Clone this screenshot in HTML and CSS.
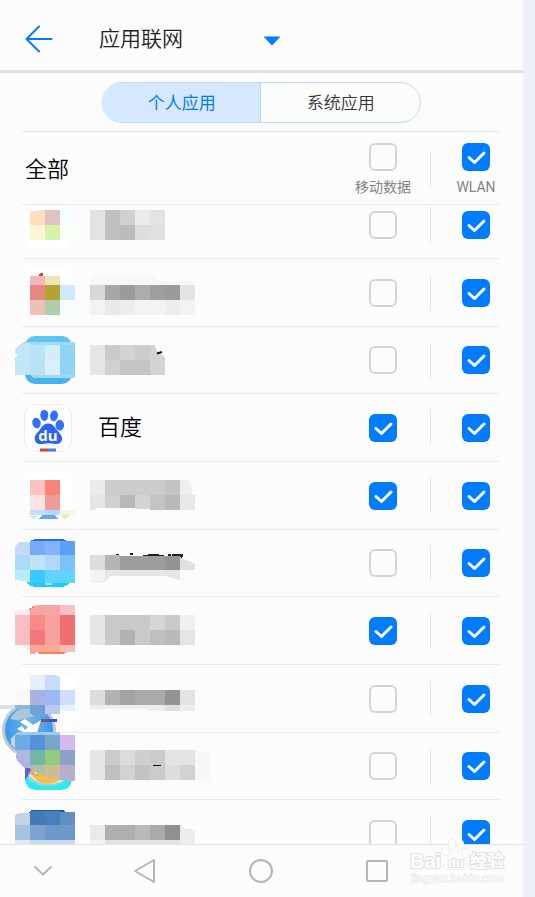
FILE: index.html
```html
<!DOCTYPE html>
<html lang="zh-CN">
<head>
<meta charset="utf-8">
<meta name="viewport" content="width=device-width, initial-scale=1">
<title>应用联网</title>
<link rel="stylesheet" href="styles.css">
</head>
<body>
<div class="screen">
  <header class="topbar">
    <button class="icon-button" type="button" aria-label="返回">
      <svg width="28" height="28" viewBox="0 0 28 28" fill="none" stroke="#007dff" stroke-width="2" stroke-linecap="round" stroke-linejoin="round"><path d="M26.500 14H1.500M14 1.500L1.500 14L14 26.500"/></svg>
    </button>
    <h1 class="title">应用联网</h1>
    <button class="icon-button" type="button" aria-label="菜单">
      <svg width="18" height="10" viewBox="0 0 18 10"><path d="M0.500 0.500H17.500L9 9.500Z" fill="#007dff"/></svg>
    </button>
  </header>

  <nav class="tabs">
    <button class="tab tab-active" type="button">个人应用</button>
    <button class="tab" type="button">系统应用</button>
  </nav>

  <section class="row all-row">
    <h2 class="name">全部</h2>
    <label class="check-field"><input class="check" type="checkbox">移动数据</label>
    <span class="divider"></span>
    <label class="check-field"><input class="check" type="checkbox" checked>WLAN</label>
  </section>

  <ul class="list">
    <li class="row">
      <svg class="art" width="215" height="67" viewBox="0 191 215 67" shape-rendering="crispEdges">
        <rect x="25" y="206" width="47" height="42" rx="9" fill="#fff"/>
        <path d="M30 212L42 210H45V225H30Z" fill="#ffdebb"/><path d="M45 210h15v15h-15z" fill="#dfc3c1"/><path d="M60 210h15v15h-15z" fill="#f6ffff"/>
        <path d="M30 225h15v15h-15z" fill="#fff5d3"/><path d="M45 225h15v15h-15z" fill="#d6f3a9"/><path d="M60 225h15v15h-15z" fill="#fafff7"/>
        <path d="M90 210h15v30h-15zM150 210h15v15h-15z" fill="#e3e3e3"/><path d="M105 210h15v30h-15z" fill="#c0c0c0"/><path d="M120 210h15v15h-15z" fill="#d0d0d0"/><path d="M135 210h15v15h-15z" fill="#ebebeb"/>
        <path d="M120 225h15v15h-15z" fill="#bcbcbc"/><path d="M135 225h15v15h-15z" fill="#ddd"/><path d="M150 225h15v15h-15z" fill="#e0e0e0"/>
      </svg>
      <input class="check" type="checkbox" aria-label="移动数据"><span class="divider"></span><input class="check" type="checkbox" aria-label="WLAN" checked>
    </li>
    <li class="row">
      <svg class="art" width="215" height="67" viewBox="0 259 215 67" shape-rendering="crispEdges">
        <rect x="25" y="269" width="47" height="46" rx="9" fill="#fff"/>
        <circle cx="41" cy="275" r="2" fill="#d8453c"/>
        <path d="M30 276h15v9h-15z" fill="#f1b8b5"/><path d="M45 276h15v9h-15z" fill="#e8e6b3"/>
        <path d="M30 285h15v15h-15z" fill="#e78983"/><path d="M45 285h15v15h-15z" fill="#b6a134"/><path d="M60 285h15v15h-15z" fill="#cdebf8"/>
        <path d="M30 300h15v15h-15z" fill="#eec0b6"/><path d="M45 300h15v15h-15z" fill="#adcdab"/><path d="M60 300h15v15h-15z" fill="#f7fcff"/>
        <path d="M90 276H120V275H135V276H154L160 281H195V285H90Z" fill="#f7f7f7"/>
        <path d="M90 285h15v15h-15z" fill="#d7d7d7"/><path d="M105 285h15v15h-15z" fill="#a7a7a7"/><path d="M120 285h15v15h-15zM165 285h15v15h-15z" fill="#9b9b9b"/><path d="M135 285h15v15h-15z" fill="#acacac"/><path d="M150 285h15v15h-15z" fill="#9f9f9f"/><path d="M180 285h15v15h-15z" fill="#e4e4e4"/>
        <path d="M90 300h105v15h-105z" fill="#f3f3f3"/><path d="M105 300h15v15h-15z" fill="#e9e9e9"/><path d="M120 300h15v15h-15zM165 300h15v15h-15z" fill="#ededed"/>
      </svg>
      <input class="check" type="checkbox" aria-label="移动数据"><span class="divider"></span><input class="check" type="checkbox" aria-label="WLAN" checked>
    </li>
    <li class="row">
      <svg class="art" width="215" height="66" viewBox="0 327 215 66">
        <rect x="25" y="336" width="47" height="24" rx="10" fill="#5bc4f1"/><rect x="25" y="355" width="47" height="29" rx="10" fill="#45b3ee"/>
        <g shape-rendering="crispEdges">
        <path d="M25 342H75V345H20Z" fill="#a1dbf6"/><path d="M30 375H75V378H33Z" fill="#a1d8f6"/>
        <path d="M30 343V375H15V357L17 356V354L15 353V349L20 344Z" fill="#c1e6f8"/><path d="M30 345h15v30h-15z" fill="#b9e2f7"/><path d="M45 345h15v15h-15z" fill="#d5edfb"/><path d="M45 360h15v15h-15z" fill="#dceffa"/><path d="M60 345h15v30h-15z" fill="#90d3f5"/>
        <path d="M90 345h15v30h-15z" fill="#e6e6e6"/><path d="M105 345h15v15h-15z" fill="#cacaca"/><path d="M120 345h15v15h-15zM150 345h5l2 7l8 5v18h-15z" fill="#d3d3d3"/><path d="M135 345h15v15h-15z" fill="#ccc"/><path d="M105 360h15v15h-15z" fill="#d0d0d0"/><path d="M120 360h30v15h-30z" fill="#c4c4c4"/></g>
        <path d="M157 353.500L162 352" stroke="#111" stroke-width="2"/>
      </svg>
      <input class="check" type="checkbox" aria-label="移动数据"><span class="divider"></span><input class="check" type="checkbox" aria-label="WLAN" checked>
    </li>
    <li class="row">
      <svg class="app-icon" width="48" height="48" viewBox="0 0 48 48" role="img" aria-label="百度">
        <rect x="0.500" y="0.500" width="47" height="47" rx="10" fill="#fff" stroke="#eee"/>
        <g fill="#3170fb"><ellipse cx="12.500" cy="19" rx="4.200" ry="5.400" transform="rotate(-12 12.500 19)"/><ellipse cx="20.300" cy="11.300" rx="4" ry="5.600"/><ellipse cx="30" cy="11.800" rx="4" ry="5.400" transform="rotate(8 30 11.800)"/><ellipse cx="35.800" cy="21.200" rx="4.300" ry="5.400"/>
        <path d="M24 19.500C28.500 19.500 30.500 22.500 32.500 25.500C34.500 28.500 38 30.500 38 34.500C38 38.500 35 40.300 31.500 40.100C28 39.900 26.500 39.300 24 39.300C21.500 39.300 19 40.200 16 40.100C12.500 40 10.500 37.500 10.800 33.500C11.200 30 14 28.500 16 25.500C18 22.500 20 19.500 24 19.500Z" fill="#2b63f6"/></g>
        <text class="du" x="24" y="37" text-anchor="middle" fill="#fff">du</text>
        <path d="M16 44.500h8v3h-8z" fill="#dc3c43"/><path d="M24 44.500h8v3h-8z" fill="#3f7bfa"/>
      </svg>
      <span class="name">百度</span>
      <input class="check" type="checkbox" aria-label="百度 移动数据" checked><span class="divider"></span><input class="check" type="checkbox" aria-label="百度 WLAN" checked>
    </li>
    <li class="row">
      <svg class="art" width="215" height="67" viewBox="0 462 215 67" shape-rendering="crispEdges">
        <rect x="25" y="472" width="47" height="43" rx="9" fill="#fff"/>
        <path d="M30 480h15v15h-15z" fill="#fcc3bf"/><path d="M45 480h15v15h-15z" fill="#f88379"/><path d="M30 495h15v15h-15z" fill="#fae5e4"/><path d="M45 495h15v15h-15z" fill="#f09b9b"/>
        <path d="M30 510h15v5h-15z" fill="#bfe0f8"/><path d="M45 510h15v5h-15z" fill="#b8d8fb"/><path d="M60 510h15v5h-15z" fill="#eef8dc"/>
        <path d="M42 515H55L58 519H39Z" fill="#5da9ff"/><path d="M28 516h9l-3 3z" fill="#c7ebff"/><path d="M60 515h11l-6 4z" fill="#daf5b0"/>
        <path d="M90 480h15v15h-15z" fill="#ebebeb"/><path d="M105 480h60v15h-60z" fill="#ccc"/><path d="M165 480h15v15h-15z" fill="#c2c2c2"/><path d="M180 480h8l4 7v8h-12z" fill="#eee"/>
        <path d="M90 495h15v13h-9l-1 2h-5z" fill="#e5e5e5"/><path d="M105 495h15v13h-15z" fill="#d0d0d0"/><path d="M120 495h15v13h-15z" fill="#b8b8b8"/><path d="M135 495h15v14h-15z" fill="#d3d3d3"/><path d="M150 495h15v15h-15z" fill="#c4c4c4"/><path d="M165 495h15v15h-15z" fill="#b9b9b9"/><path d="M180 495h15v15h-15z" fill="#e8e8e8"/>
      </svg>
      <input class="check" type="checkbox" aria-label="移动数据" checked><span class="divider"></span><input class="check" type="checkbox" aria-label="WLAN" checked>
    </li>
    <li class="row">
      <svg class="art" width="215" height="66" viewBox="0 530 215 66" shape-rendering="crispEdges">
        <path d="M29 542Q32 539 38 539H60Q65 539 68 542Z" fill="#1f6ff0"/><path d="M27 582H70Q67 587 60 587H36Q30 587 27 582Z" fill="#1dccff"/><path d="M45 583h7v2h-7z" fill="#9ceaff"/>
        <path d="M15 546L20 542H30V555H15Z" fill="#c4daf8"/><path d="M30 541h15v14h-15z" fill="#78a9f6"/><path d="M45 541h15v14h-15z" fill="#86b2f7"/><path d="M60 541h15v14h-15z" fill="#5d9ff7"/>
        <path d="M15 555h15v15h-15z" fill="#aedafa"/><path d="M30 555h15v15h-15z" fill="#c0e2fd"/><path d="M45 555h15v15h-15z" fill="#b1d7fb"/><path d="M60 555h15v15h-15z" fill="#7cc2f8"/>
        <path d="M15 570h15v12l-15-2z" fill="#bbebfa"/><path d="M30 570h15v13h-15z" fill="#3ac8ff"/><path d="M45 570h30v13h-30z" fill="#62d3fe"/>
        <path d="M116 555h3M130 554h3M143 556L153 555L164 556M168 555h3M172 555H182L181 558" stroke="#222" stroke-width="2" fill="none"/>
        <path d="M90 555h15v15h-15z" fill="#ddd"/><path d="M105 555h15v15h-15z" fill="#b5b5b5"/><path d="M120 556h45v14h-45z" fill="#9d9d9d"/><path d="M165 556h15v14h-15z" fill="#949494"/><path d="M180 557L195 564V570H180Z" fill="#e0e0e0"/>
        <path d="M90 570h15v13h-15z" fill="#f3f3f3"/><path d="M105 570H180V580L165 576H110L105 582Z" fill="#e6e6e6"/>
      </svg>
      <input class="check" type="checkbox" aria-label="移动数据"><span class="divider"></span><input class="check" type="checkbox" aria-label="WLAN" checked>
    </li>
    <li class="row">
      <svg class="art" width="215" height="67" viewBox="0 597 215 67" shape-rendering="crispEdges">
        <path d="M28 610L34 606L30 612Z" fill="#ee5248"/><path d="M34 650H68Q66 654 60 654H40Z" fill="#ff8055"/>
        <path d="M30 609L37 605H60V615H30Z" fill="#f7a4a5"/><path d="M60 605h15v10h-15z" fill="#f7c2c2"/><path d="M15 610h15v5h-15z" fill="#fdebeb"/>
        <path d="M15 615h15v30h-15z" fill="#f8bec1"/><path d="M30 615h15v15h-15z" fill="#f78a89"/><path d="M45 615h15v30h-15z" fill="#f8a1a1"/><path d="M60 615h15v30h-15z" fill="#f26f70"/><path d="M30 630h15v15h-15z" fill="#f47879"/>
        <path d="M22 645h8v8z" fill="#fdeae6"/><path d="M30 645h15v7h-9l-1 2h-5z" fill="#faa596"/><path d="M45 645h15v7h-15z" fill="#feaa90"/><path d="M60 645h15v7h-15z" fill="#fbbfb8"/>
        <path d="M90 615h15v30h-15z" fill="#e6e6e6"/><path d="M105 615h45v30h-45z" fill="#c9c9c9"/><path d="M150 615h15v15h-15z" fill="#d6d6d6"/><path d="M165 615h15v15h-15z" fill="#cacaca"/><path d="M180 615h15v15h-15z" fill="#f0f0f0"/><path d="M120 630h15v15h-15z" fill="#b2b2b2"/><path d="M150 630h15v15h-15z" fill="#bfbfbf"/><path d="M165 630h15v15h-15z" fill="#bababa"/><path d="M180 630h15v15h-15z" fill="#e5e5e5"/>
      </svg>
      <input class="check" type="checkbox" aria-label="移动数据" checked><span class="divider"></span><input class="check" type="checkbox" aria-label="WLAN" checked>
    </li>
    <li class="row">
      <svg class="art" width="215" height="67" viewBox="0 665 215 67">
        <defs><linearGradient id="ball" x1="0" y1="0" x2="1" y2="0"><stop offset="0" stop-color="#3497ee"/><stop offset="0.500" stop-color="#78b5e3"/><stop offset="1" stop-color="#3497ee"/></linearGradient></defs>
        <path d="M48 676H75V709Q72 722 57 722H45Z" fill="#fff"/>
        <circle cx="29" cy="730" r="27" fill="#c5c8ca"/><circle cx="29" cy="730" r="24" fill="url(#ball)"/>
        <path d="M10 719Q16 708 27 708Q40 709 46 716Q38 714 30 717Q21 722 10 719Z" fill="#a9c8dd"/>
        <path d="M17 729L22 726L25 730L28 727L20 722L25 719L33 725L41 720L37 733H25Z" fill="#fff"/>
        <g shape-rendering="crispEdges"><path d="M41 719h8v3h-8z" fill="#844b70"/><path d="M49 719h8v3h-8z" fill="#235bd8"/>
        <path d="M0 705h15v4h-15z" fill="#d3e1ea"/><path d="M15 705h15v4h-15z" fill="#8db7d5"/><path d="M30 705h15v11h-10l-5-3z" fill="#739fd8"/><path d="M45 705h15v9h-15z" fill="#b9c9f2"/><path d="M60 705h15v6h-15z" fill="#e9effd"/>
        <path d="M30 675h15v15h-15z" fill="#e7effd"/><path d="M45 675h9l6 2v13h-15z" fill="#c9dbfc"/><path d="M15 690h15v15h-15z" fill="#f8f8f8"/><path d="M30 690h15v15h-15z" fill="#a9b3e2"/><path d="M45 690h15v15h-15z" fill="#9fb7ef"/><path d="M60 690h15v15h-15z" fill="#d0defd"/>
        <path d="M90 690h15v15h-15z" fill="#ddd"/><path d="M105 690h15v15h-15z" fill="#b2b2b2"/><path d="M120 690h15v15h-15z" fill="#a3a3a3"/><path d="M135 690h30v15h-30z" fill="#aaa"/><path d="M165 690h15v15h-15z" fill="#949494"/><path d="M180 690h15v15h-15z" fill="#e4e4e4"/>
        <path d="M90 705H195V711H148V709H90Z" fill="#ededed"/><path d="M165 705h15v6h-15z" fill="#dfdfdf"/></g>
      </svg>
      <input class="check" type="checkbox" aria-label="移动数据"><span class="divider"></span><input class="check" type="checkbox" aria-label="WLAN" checked>
    </li>
    <li class="row">
      <svg class="art" width="215" height="66" viewBox="0 733 215 66">
        <defs><clipPath id="planet"><path d="M25 757H72V779Q71 790 61 790H37Q26 790 25 779Z"/></clipPath></defs>
        <g clip-path="url(#planet)"><path d="M20 750H75V792H20Z" fill="#2cebed"/><ellipse cx="48" cy="766" rx="26" ry="20" fill="#8fd9dc"/><ellipse cx="49" cy="764" rx="24" ry="20" fill="#d6f3e9"/><ellipse cx="48" cy="765" rx="19" ry="19" fill="#f8bd51"/><path d="M23 762L32 768L28 776L25 780Z" fill="#655de0"/><path d="M28 774L34 770L39 776Z" fill="#ff9e4b"/><path d="M34 770l5 3-4 1z" fill="#fff"/></g>
        <g shape-rendering="crispEdges">
        <path d="M17 732H60V735H14Z" fill="#9dcbea"/><path d="M11 745V739L15 734V748Z" fill="#b9d6ea"/><path d="M15 735h15v15h-15z" fill="#6dabe4"/><path d="M30 735h15v15h-15z" fill="#5591df"/><path d="M45 735h15v15h-15z" fill="#78a6c9"/><path d="M60 735h15v15h-15z" fill="#d5b9f0"/>
        <path d="M17 750h13v18h-5l-6-5l-3-5z" fill="#adb7e2"/><path d="M30 750h15v15h-15z" fill="#72b6a3"/><path d="M45 750h15v15h-15z" fill="#92cb81"/><path d="M60 750h15v15h-15z" fill="#8ba1c7"/><path d="M30 765H45V776L39 774L30 769Z" fill="#b3bea8"/><path d="M45 765h15v15l-15-4z" fill="#c9bd98"/><path d="M60 765h15v16l-15-1z" fill="#b6aecb"/>
        <path d="M90 750h15v30h-15z" fill="#e6e6e6"/><path d="M105 750h15v15h-15z" fill="#cbcbcb"/><path d="M120 750h15v15h-15z" fill="#dcdcdc"/><path d="M135 750h15v15h-15z" fill="#cfcfcf"/><path d="M150 750h15v30h-15z" fill="#cbcbcb"/><path d="M165 750h30v15h-30z" fill="#e3e3e3"/><path d="M195 750l15 2v28h-15z" fill="#f7f7f7"/>
        <path d="M105 765h15v15h-15z" fill="#bfbfbf"/><path d="M120 765h15v15h-15zM180 765h15v15h-15z" fill="#d2d2d2"/><path d="M135 765h15v15h-15z" fill="#c3c3c3"/><path d="M165 765h15v15h-15z" fill="#ddd"/><path d="M153 765h8v1h-8z" fill="#111"/></g>
      </svg>
      <input class="check" type="checkbox" aria-label="移动数据"><span class="divider"></span><input class="check" type="checkbox" aria-label="WLAN" checked>
    </li>
    <li class="row">
      <svg class="art" width="215" height="67" viewBox="0 800 215 67" shape-rendering="crispEdges">
        <path d="M28 813L32 810H63L68 813Z" fill="#145ba5"/><path d="M15 815L20 813H30V825H15Z" fill="#c0d3e8"/><path d="M30 811h15v14h-15z" fill="#427ab8"/><path d="M45 811h15v14h-15z" fill="#4a7fbd"/><path d="M60 812h15v13h-15z" fill="#5e90c2"/>
        <path d="M15 825h15v15h-15z" fill="#a8c3e1"/><path d="M30 825h15v15h-15z" fill="#7ea3d0"/><path d="M45 825h30v15h-30z" fill="#6c98cc"/><path d="M15 840h15v5h-15z" fill="#e0e9f2"/><path d="M30 840h45v5h-45z" fill="#cadbeb"/>
        <path d="M90 825h15v15h-15z" fill="#eaeaea"/><path d="M105 825h30v15h-30z" fill="#afafaf"/><path d="M135 825h15v15h-15z" fill="#b9b9b9"/><path d="M150 825h15v15h-15z" fill="#aaa"/><path d="M165 825h15v15h-15z" fill="#909090"/><path d="M180 825L183 828L195 830V845H180Z" fill="#ededed"/>
        <path d="M90 840h15v5h-15z" fill="#f3f3f3"/><path d="M105 840h75v5h-75z" fill="#e2e2e2"/>
      </svg>
      <input class="check" type="checkbox" aria-label="移动数据"><span class="divider"></span><input class="check" type="checkbox" aria-label="WLAN" checked>
    </li>
  </ul>

  <footer class="navbar">
    <button class="icon-button" type="button" aria-label="收起"><svg width="20" height="24" viewBox="0 0 20 24" fill="none" stroke="#b5b5b5" stroke-width="2"><path d="M0.500 7.500L9 15.500L17.500 7.500"/></svg></button>
    <button class="icon-button" type="button" aria-label="后退"><svg width="24" height="26" viewBox="0 0 24 26" fill="none" stroke="#b5b5b5" stroke-width="2" stroke-linejoin="round"><path d="M21 2V24L2 13Z"/></svg></button>
    <button class="icon-button" type="button" aria-label="主页"><svg width="26" height="26" viewBox="0 0 26 26" fill="none" stroke="#b5b5b5" stroke-width="2"><circle cx="13" cy="13" r="11"/></svg></button>
    <button class="icon-button" type="button" aria-label="最近任务"><svg width="22" height="22" viewBox="0 0 22 22" fill="none" stroke="#b5b5b5" stroke-width="2"><rect x="1" y="1" width="20" height="20" rx="1"/></svg></button>
    <svg class="watermark" width="100" height="48" viewBox="408 838 100 48" fill="#fff" stroke="#e0e0e0" stroke-width="1" paint-order="stroke">
      <ellipse cx="445.500" cy="850.500" rx="3.500" ry="4.500"/><ellipse cx="452" cy="844.500" rx="3.500" ry="5"/><ellipse cx="460.500" cy="845" rx="3.500" ry="5"/><ellipse cx="466" cy="853" rx="3.500" ry="4.500"/>
      <path d="M455.500 852C459 852 461 855 463 858C466 861 468 863 467 866.500C466 870 462 870 456 869C449 870 445 870 444 866.500C443 863 446 861 448.500 858C450.500 855 452 852 455.500 852Z"/>
      <g stroke-width="2"><text class="wm-latin" x="410" y="868">Bai</text><text class="wm-du" x="448" y="867">du</text><text class="wm-han" x="470" y="867">经验</text></g>
      <text class="wm-url" x="411" y="882">jingyan.baidu.com</text>
    </svg>
  </footer>
</div>
</body>
</html>
```
FILE: styles.css
```css
* {
  box-sizing: border-box;
}

body {
  margin: 0;
  background: #ebf0fa;
  color: #111;
  font-family: Roboto, "Noto Sans CJK SC", sans-serif;
}

.screen {
  display: flex;
  flex-direction: column;
  height: 100vh;
  margin-right: 12px;
  background: #fcfcfc;
}

button {
  padding: 0;
  border: 0;
  background: none;
  font: inherit;
}

svg {
  display: block;
}

.icon-button {
  display: flex;
  align-items: center;
  justify-content: center;
}

.topbar {
  display: flex;
  align-items: center;
  padding: 24px 25px 16px;
  border-bottom: 3px solid #e2e2e2;
}

.title {
  margin: 0 80px 0 46px;
  color: #222;
  font-size: 21px;
  font-weight: 350;
  line-height: 30px;
}

.topbar .icon-button + .title + .icon-button {
  padding-top: 4px;
}

.tabs {
  display: grid;
  grid-template-columns: 1fr 1fr;
  width: 61%;
  height: 41px;
  margin: 9px auto 8px;
  overflow: hidden;
  border: 1px solid #bcdcff;
  border-radius: 21px;
}

.tab {
  padding-bottom: 2px;
  color: #333;
  font-size: 17px;
  font-weight: 350;
}

.tab-active {
  border-right: 1px solid #b0d6ff;
  background: #d5e8fd;
  color: #007dff;
  font-weight: 400;
}

.row {
  display: grid;
  grid-template-columns: auto 1fr 94px 1px 68px;
  align-items: center;
  height: 68px;
  margin: 0 24px 0 22px;
  border-bottom: 1px solid #eaeaea;
}

.row:nth-child(3n) {
  height: 67px;
}

.name {
  grid-column: 2;
  margin: 0;
  padding-left: 26px;
  color: #000;
  font-size: 22px;
  font-weight: 350;
  line-height: 30px;
}

.screen > .all-row {
  height: 74px;
  padding-top: 3px;
  border-top: 1px solid #e6e6e6;
}

.all-row .name {
  padding-left: 3px;
}

.list {
  flex: 1 1 0;
  min-height: 0;
  margin: 0;
  padding: 0;
  overflow: hidden;
  list-style: none;
}

.list .row:first-child {
  margin-top: -14px;
}

.art {
  grid-column: 1 / 3;
  margin-left: -22px;
  overflow: visible;
}

.app-icon {
  margin-left: 2px;
}

.du {
  font: 700 15px "Open Sans", sans-serif;
}

.check {
  grid-column: 3;
  justify-self: center;
  width: 28px;
  height: 28px;
  margin: 0;
  appearance: none;
  border: 2px solid #d4d4d4;
  border-radius: 6px;
}

.check:checked {
  border: 0;
  background: #007dff url("data:image/svg+xml,%3Csvg xmlns='http://www.w3.org/2000/svg' viewBox='0 0 28 28'%3E%3Cpath d='M7 14.500L12.500 19.500L22 10' fill='none' stroke='white' stroke-width='3' stroke-linecap='round' stroke-linejoin='round'/%3E%3C/svg%3E");
}

.divider {
  grid-column: 4;
  height: 35px;
  background: #e6e6e6;
}

.divider + .check {
  grid-column: 5;
  justify-self: end;
  margin-right: 9px;
}

.check-field {
  display: flex;
  flex-direction: column;
  gap: 6px;
  align-items: center;
  grid-column: 3;
  color: #858585;
  font-size: 14px;
  line-height: 20px;
}

.divider + .check-field {
  grid-column: 5;
  padding-left: 22px;
}

.check-field .check {
  margin: 0;
}

.navbar {
  position: relative;
  display: grid;
  grid-template-columns: 87fr 116fr 116fr 116fr 88fr;
  height: 53px;
  border-top: 1px solid #e2e2e2;
}

.watermark {
  position: absolute;
  right: 15px;
  bottom: 11px;
}

.wm-latin {
  font: 700 20px "Liberation Sans", sans-serif;
}

.wm-du {
  font: 700 13px "Liberation Sans", sans-serif;
}

.wm-han {
  font: 700 17px "Noto Sans CJK SC", sans-serif;
}

.wm-url {
  font: 400 10px "DejaVu Sans", sans-serif;
}
```
